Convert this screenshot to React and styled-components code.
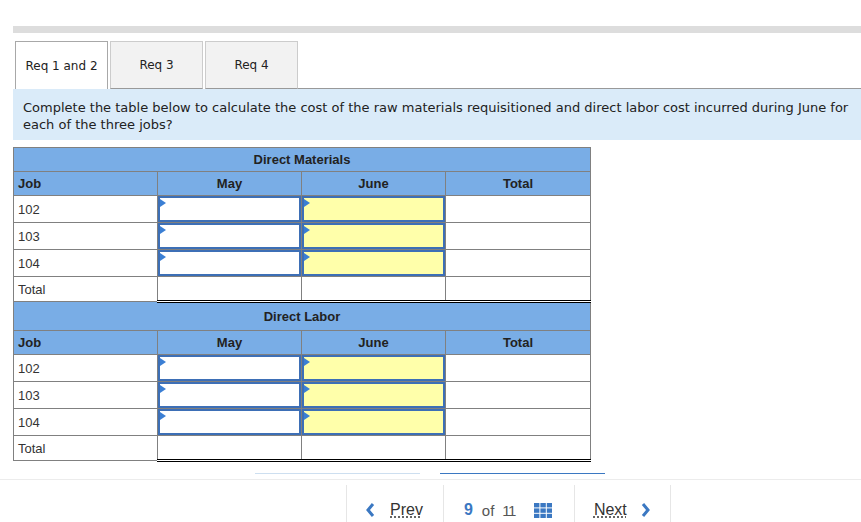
import styled, { createGlobalStyle } from "styled-components";

const GlobalStyle = createGlobalStyle`
    html, body {
        margin: 0;
        padding: 0;
        overflow: hidden;
        background: #ffffff;
    }
`;

const jobs = ["102", "103", "104"];

function App() {
    return (
        <>
            <GlobalStyle />
            <Page>
                <Main>
                    <TopBar />
                    <Tabs>
                        <Tab $active>Req 1 and 2</Tab>
                        <Tab>Req 3</Tab>
                        <Tab>Req 4</Tab>
                        <TabFiller />
                    </Tabs>
                    <Instruction>
                        Complete the table below to calculate the cost of the raw materials requisitioned and direct labor cost incurred during June for each of the three jobs?
                    </Instruction>
                    <Table>
                        <colgroup>
                            <col style={{ width: 144 }} />
                            <col style={{ width: 144 }} />
                            <col style={{ width: 144 }} />
                            <col style={{ width: 145 }} />
                        </colgroup>
                        <tbody>
                            <Section title="Direct Materials" first />
                            <Section title="Direct Labor" />
                        </tbody>
                    </Table>
                    <Progress>
                        <ProgressBar />
                        <ProgressBar $current />
                    </Progress>
                </Main>
                <Footer>
                    <NavItem $left={19} $right={20}>
                        <Chevron dir="left" />
                        <NavLink>Prev</NavLink>
                    </NavItem>
                    <NavItem $left={20} $right={22} $gap={0}>
                        <PageNum>9</PageNum>
                        <PageOf>of</PageOf>
                        <PageTotal>11</PageTotal>
                        <GridIcon />
                    </NavItem>
                    <NavItem $left={19} $right={20} $gap={14} $last>
                        <NavLink>Next</NavLink>
                        <Chevron dir="right" />
                    </NavItem>
                </Footer>
            </Page>
        </>
    );
}

function Section({ title, first }) {
    return (
        <>
            <TitleRow $first={first}>
                <HeadCell colSpan={4}>{title}</HeadCell>
            </TitleRow>
            <HeadRow>
                <HeadCell $left>Job</HeadCell>
                <HeadCell>May</HeadCell>
                <HeadCell>June</HeadCell>
                <HeadCell>Total</HeadCell>
            </HeadRow>
            {jobs.map((job) => (
                <DataRow key={job}>
                    <JobCell>{job}</JobCell>
                    <InputCell><Field /></InputCell>
                    <InputCell><Field $yellow /></InputCell>
                    <Cell />
                </DataRow>
            ))}
            <TotalRow>
                <JobCell>Total</JobCell>
                <TotalCell />
                <TotalCell />
                <TotalCell />
            </TotalRow>
        </>
    );
}

function Chevron({ dir }) {
    const points = dir === "left" ? "7,1 2,7 7,13" : "2,1 7,7 2,13";
    return (
        <svg width="9" height="14" viewBox="0 0 9 14">
            <polyline points={points} fill="none" stroke="#3b78c2" strokeWidth="3" strokeLinejoin="miter" />
        </svg>
    );
}

function GridIcon() {
    const cells = [];
    for (let r = 0; r < 3; r++) {
        for (let c = 0; c < 3; c++) {
            cells.push(<rect key={r + "-" + c} x={c * 6.4} y={r * 5.4} width="5.4" height="4.4" fill="#3b78c2" />);
        }
    }
    return (
        <svg width="18" height="15" viewBox="0 0 18 15" style={{ marginLeft: 19 }}>
            {cells}
        </svg>
    );
}

export default App;

const Page = styled.div`
    width: 861px;
    height: 522px;
    overflow: hidden;
`;

const Main = styled.div`
    padding: 26px 0 0 13px;
`;

const TopBar = styled.div`
    height: 7px;
    background-color: #dddddd;
`;

const Tabs = styled.div`
    display: flex;
    align-items: flex-end;
    margin-top: 8px;
    padding-left: 2px;
    gap: 2px;
`;

const Tab = styled.div`
    width: 93px;
    height: 48px;
    box-sizing: border-box;
    display: flex;
    align-items: center;
    justify-content: center;
    font-family: Verdana, "DejaVu Sans", sans-serif;
    font-size: 12px;
    color: #222;
    background-color: ${(p) => (p.$active ? "#ffffff" : "#f2f2f2")};
    border: 1px solid ${(p) => (p.$active ? "#a8a8a8" : "#cccccc")};
    border-bottom: ${(p) => (p.$active ? "none" : "1px solid #999999")};
`;

const TabFiller = styled.div`
    flex: 1;
    border-bottom: 1px solid #999999;
    margin-left: -2px;
`;

const Instruction = styled.div`
    background-color: #daebf9;
    padding: 10px 10px 7px 10px;
    font-family: Verdana, "DejaVu Sans", sans-serif;
    font-size: 13px;
    line-height: 17px;
    color: #222;
`;

const Table = styled.table`
    margin-top: 7px;
    width: 577px;
    border-collapse: collapse;
    table-layout: fixed;
    font-family: Arial, "Liberation Sans", sans-serif;
    font-size: 13px;
    border: 1px solid #808080;
`;

const TitleRow = styled.tr`
    height: ${(p) => (p.$first ? "24px" : "29px")};
`;

const HeadRow = styled.tr`
    height: 24px;
`;

const DataRow = styled.tr`
    height: 27px;
`;

const TotalRow = styled.tr`
    height: 25px;
`;

const HeadCell = styled.td`
    background-color: #79ade6;
    border: 1px solid #808080;
    padding: 0 4px;
    text-align: ${(p) => (p.$left ? "left" : "center")};
    font-weight: bold;
    color: #222;
`;

const Cell = styled.td`
    border: 1px solid #808080;
    padding: 0 4px;
    color: #333;
`;

const JobCell = styled(Cell)`
    text-align: left;
`;

const InputCell = styled.td`
    border: 1px solid #808080;
    padding: 0;
`;

const Field = styled.div`
    position: relative;
    height: 26px;
    box-sizing: border-box;
    border: 2px solid #3d6fb6;
    background-color: ${(p) => (p.$yellow ? "#ffffaa" : "#ffffff")};

    &::before {
        content: "";
        position: absolute;
        left: 0;
        top: 1px;
        border-top: 4px solid transparent;
        border-bottom: 4px solid transparent;
        border-left: 6px solid #3b7fd4;
    }
`;

const TotalCell = styled.td`
    border: 1px solid #808080;
    border-top: 1px solid #000000;
    border-bottom: 3px double #000000;
    padding: 0;
`;

const Progress = styled.div`
    display: flex;
    gap: 20px;
    margin-top: 11px;
    padding-left: 242px;
`;

const ProgressBar = styled.div`
    width: 165px;
    height: 1px;
    background-color: ${(p) => (p.$current ? "#3b78c2" : "#cddff0")};
`;

const Footer = styled.div`
    margin-top: 5px;
    border-top: 1px solid #ececec;
    padding: 5px 0 0 346px;
    display: flex;
`;

const NavItem = styled.div`
    height: 50px;
    display: flex;
    align-items: center;
    padding: 0 ${(p) => p.$right}px 0 ${(p) => p.$left}px;
    border-left: 1px solid #e6e6e6;
    border-right: ${(p) => (p.$last ? "1px solid #e6e6e6" : "none")};
    gap: ${(p) => (p.$gap ?? 15)}px;
    font-family: Arial, "Liberation Sans", sans-serif;
    font-size: 16px;
`;

const NavLink = styled.span`
    color: #333;
    text-decoration: underline dotted #333;
    text-underline-offset: 2px;
`;

const PageNum = styled.span`
    color: #3b78c2;
    font-weight: bold;
    margin-right: 9px;
`;

const PageOf = styled.span`
    color: #555;
    font-size: 15px;
    margin-right: 8px;
`;

const PageTotal = styled.span`
    color: #555;
    font-size: 15px;
    letter-spacing: -1.5px;
`;
